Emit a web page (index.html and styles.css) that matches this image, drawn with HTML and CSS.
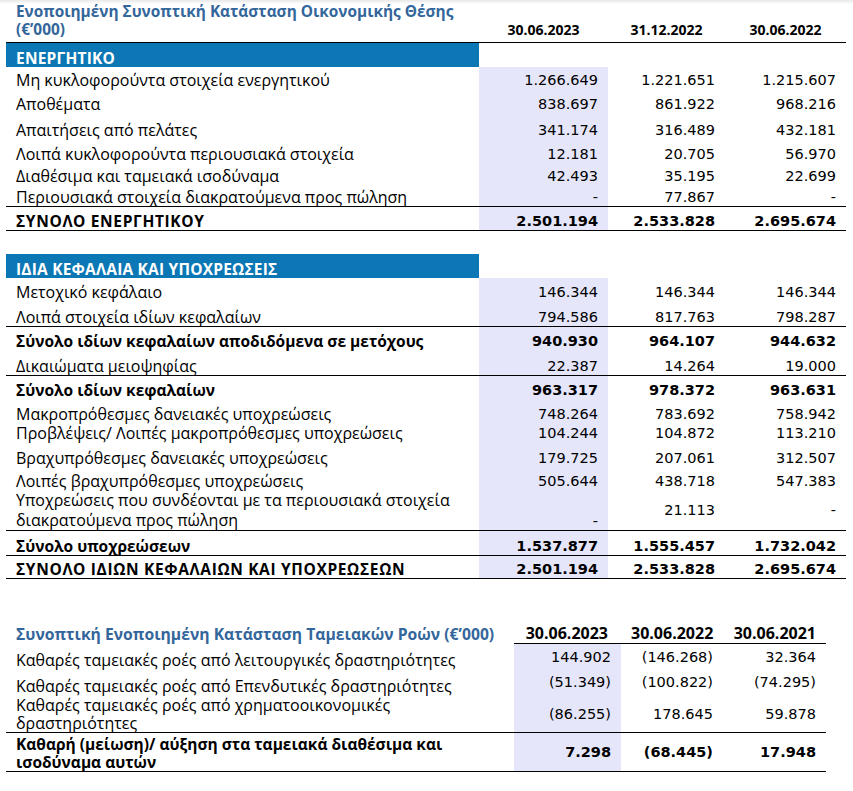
FILE: index.html
```html
<!DOCTYPE html>
<html lang="el">
<head>
<meta charset="utf-8">
<title>Οικονομικές Καταστάσεις</title>
<link rel="stylesheet" href="styles.css">
</head>
<body>
<div class="page">
  <table class="fs">
    <colgroup>
      <col class="c-label"><col class="c-1"><col class="c-2"><col class="c-3">
    </colgroup>
    <thead>
      <tr class="head">
        <th class="title">Ενοποιημένη Συνοπτική Κατάσταση Οικονομικής Θέσης (€’000)</th>
        <th class="date">30.06.2023</th>
        <th class="date">31.12.2022</th>
        <th class="date">30.06.2022</th>
      </tr>
    </thead>
    <tbody>
      <tr class="band h24"><td class="lbl">ΕΝΕΡΓΗΤΙΚΟ</td><td></td><td></td><td></td></tr>
      <tr class="h22"><td class="lbl">Μη κυκλοφορούντα στοιχεία ενεργητικού</td><td class="num hl">1.266.649</td><td class="num">1.221.651</td><td class="num">1.215.607</td></tr>
      <tr class="h24"><td class="lbl">Αποθέματα</td><td class="num hl">838.697</td><td class="num">861.922</td><td class="num">968.216</td></tr>
      <tr class="h26"><td class="lbl">Απαιτήσεις από πελάτες</td><td class="num hl">341.174</td><td class="num">316.489</td><td class="num">432.181</td></tr>
      <tr class="h24"><td class="lbl">Λοιπά κυκλοφορούντα περιουσιακά στοιχεία</td><td class="num hl">12.181</td><td class="num">20.705</td><td class="num">56.970</td></tr>
      <tr class="h22"><td class="lbl">Διαθέσιμα και ταμειακά ισοδύναμα</td><td class="num hl">42.493</td><td class="num">35.195</td><td class="num">22.699</td></tr>
      <tr class="h22 rule"><td class="lbl">Περιουσιακά στοιχεία διακρατούμενα προς πώληση</td><td class="num hl">-</td><td class="num">77.867</td><td class="num">-</td></tr>
      <tr class="h24 bold caps rule"><td class="lbl">ΣΥΝΟΛΟ ΕΝΕΡΓΗΤΙΚΟΥ</td><td class="num hl">2.501.194</td><td class="num">2.533.828</td><td class="num">2.695.674</td></tr>
      <tr class="spacer"><td></td><td></td><td></td><td></td></tr>
      <tr class="band h24"><td class="lbl">ΙΔΙΑ ΚΕΦΑΛΑΙΑ ΚΑΙ ΥΠΟΧΡΕΩΣΕΙΣ</td><td></td><td></td><td></td></tr>
      <tr class="h23"><td class="lbl">Μετοχικό κεφάλαιο</td><td class="num hl">146.344</td><td class="num">146.344</td><td class="num">146.344</td></tr>
      <tr class="h25 rule"><td class="lbl">Λοιπά στοιχεία ιδίων κεφαλαίων</td><td class="num hl">794.586</td><td class="num">817.763</td><td class="num">798.287</td></tr>
      <tr class="h24 bold"><td class="lbl">Σύνολο ιδίων κεφαλαίων αποδιδόμενα σε μετόχους</td><td class="num hl">940.930</td><td class="num">964.107</td><td class="num">944.632</td></tr>
      <tr class="h25 rule"><td class="lbl">Δικαιώματα μειοψηφίας</td><td class="num hl">22.387</td><td class="num">14.264</td><td class="num">19.000</td></tr>
      <tr class="h24 bold"><td class="lbl">Σύνολο ιδίων κεφαλαίων</td><td class="num hl">963.317</td><td class="num">978.372</td><td class="num">963.631</td></tr>
      <tr class="h24"><td class="lbl">Μακροπρόθεσμες δανειακές υποχρεώσεις</td><td class="num hl">748.264</td><td class="num">783.692</td><td class="num">758.942</td></tr>
      <tr class="h19"><td class="lbl">Προβλέψεις/ Λοιπές μακροπρόθεσμες υποχρεώσεις</td><td class="num hl">104.244</td><td class="num">104.872</td><td class="num">113.210</td></tr>
      <tr class="h25"><td class="lbl">Βραχυπρόθεσμες δανειακές υποχρεώσεις</td><td class="num hl">179.725</td><td class="num">207.061</td><td class="num">312.507</td></tr>
      <tr class="h23"><td class="lbl">Λοιπές βραχυπρόθεσμες υποχρεώσεις</td><td class="num hl">505.644</td><td class="num">438.718</td><td class="num">547.383</td></tr>
      <tr class="h40 rule wrap"><td class="lbl">Υποχρεώσεις που συνδέονται με τα περιουσιακά στοιχεία διακρατούμενα προς πώληση</td><td class="num hl">-</td><td class="num mid">21.113</td><td class="num mid">-</td></tr>
      <tr class="h25 bold rule"><td class="lbl">Σύνολο υποχρεώσεων</td><td class="num hl">1.537.877</td><td class="num">1.555.457</td><td class="num">1.732.042</td></tr>
      <tr class="h23 bold caps rule"><td class="lbl">ΣΥΝΟΛΟ ΙΔΙΩΝ ΚΕΦΑΛΑΙΩΝ ΚΑΙ ΥΠΟΧΡΕΩΣΕΩΝ</td><td class="num hl">2.501.194</td><td class="num">2.533.828</td><td class="num">2.695.674</td></tr>
    </tbody>
  </table>

  <table class="cf">
    <colgroup>
      <col class="k-label"><col class="k-1"><col class="k-2"><col class="k-3">
    </colgroup>
    <thead>
      <tr class="head">
        <th class="title">Συνοπτική Ενοποιημένη Κατάσταση Ταμειακών Ροών (€’000)</th>
        <th class="date first">30.06.2023</th>
        <th class="date">30.06.2022</th>
        <th class="date">30.06.2021</th>
      </tr>
    </thead>
    <tbody>
      <tr class="r1"><td class="lbl">Καθαρές ταμειακές ροές από λειτουργικές δραστηριότητες</td><td class="num hl">144.902</td><td class="num">(146.268)</td><td class="num">32.364</td></tr>
      <tr class="r2"><td class="lbl">Καθαρές ταμειακές ροές από Επενδυτικές δραστηριότητες</td><td class="num hl">(51.349)</td><td class="num">(100.822)</td><td class="num">(74.295)</td></tr>
      <tr class="r3"><td class="lbl">Καθαρές ταμειακές ροές από χρηματοοικονομικές<br>δραστηριότητες</td><td class="num hl">(86.255)</td><td class="num">178.645</td><td class="num">59.878</td></tr>
      <tr class="r4 bold"><td class="lbl">Καθαρή (μείωση)/ αύξηση στα ταμειακά διαθέσιμα και<br>ισοδύναμα αυτών</td><td class="num hl">7.298</td><td class="num">(68.445)</td><td class="num">17.948</td></tr>
    </tbody>
  </table>
</div>
</body>
</html>
```

FILE: styles.css
```css
html, body {
  margin: 0;
  padding: 0;
}

body {
  background: linear-gradient(#e9e9e9, #ffffff 4px) no-repeat #ffffff;
  font-family: "Open Sans", "Noto Sans", "DejaVu Sans", sans-serif;
  font-size: 16px;
  line-height: 18px;
  color: #000000;
}

.page {
  padding: 0 6px;
}

table {
  border-collapse: collapse;
  table-layout: fixed;
}

td, th {
  padding: 0 10px;
  vertical-align: bottom;
  white-space: nowrap;
  overflow: visible;
}

/* ---------- balance sheet ---------- */
.fs {
  width: 840px;
}
.c-label { width: 473px; }
.c-1 { width: 129px; }
.c-2 { width: 117px; }
.c-3 { width: 121px; }

.head th {
  padding-top: 3px;
  padding-bottom: 3px;
  border-bottom: 1px solid #000;
}

.fs .head th {
  height: 36px;
}

.title {
  text-align: left;
  white-space: normal;
  font-size: 15.4px;
  font-weight: 700;
  color: #33669b;
}

.date {
  text-align: center;
  font-size: 14px;
  font-weight: 700;
}

.band td.lbl {
  background: #0b77b4;
  color: #ffffff;
  font-weight: 700;
  font-size: 15.5px;
  letter-spacing: 0.2px;
}

.lbl {
  text-align: left;
}

.num {
  text-align: right;
  font-family: "DejaVu Sans", "Open Sans", sans-serif;
  font-size: 14.5px;
}

.hl {
  background: #e6e6fa;
}

.num.mid {
  vertical-align: middle;
}

.bold td {
  font-weight: 700;
}

.bold td.lbl {
  font-size: 15.5px;
}

.caps td.lbl {
  letter-spacing: 0.65px;
}

.rule td {
  border-bottom: 1px solid #000;
}

.wrap td.lbl {
  white-space: normal;
  line-height: 20px;
}

.h19 { height: 19px; }
.h20 { height: 20px; }
.h21 { height: 21px; }
.h22 { height: 22px; }
.h23 { height: 23px; }
.h24 { height: 24px; }
.h25 { height: 25px; }
.h26 { height: 26px; }
.h40 { height: 40px; }

.spacer td {
  height: 23px;
}

/* ---------- cash flow ---------- */
.cf {
  width: 820px;
  margin-top: 34px;
}
.k-label { width: 508px; }
.k-1 { width: 107px; }
.k-2 { width: 102px; }
.k-3 { width: 103px; }

.cf .head th {
  height: 26px;
  padding-bottom: 1px;
}

.cf .head th.title {
  border-bottom: none;
  font-size: 15.7px;
}

.cf .date {
  text-align: right;
  font-size: 16px;
}

.cf .date.first {
  padding-right: 13px;
}

.cf td.num {
  vertical-align: middle;
}

.cf .r1 td { height: 25px; }
.cf .r2 td { height: 26px; }
.cf .r3 td { height: 37px; border-bottom: 1px solid #000; }
.cf .r4 td { height: 38px; border-bottom: 1px solid #000; }
```
